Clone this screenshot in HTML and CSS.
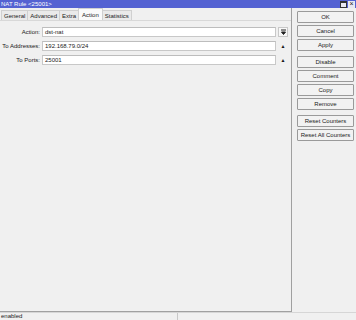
FILE: index.html
```html
<!DOCTYPE html>
<html lang="en">
<head>
    <meta charset="UTF-8">
    <title>NAT Rule &lt;25001&gt;</title>
    <link rel="stylesheet" href="styles.css">
</head>
<body>

<div class="window">
    <!-- Title bar -->
    <div class="titlebar">
        <span class="title">NAT Rule &lt;25001&gt;</span>
        <div class="win-btns">
            <span class="win-btn max"></span>
            <span class="win-btn close">&#215;</span>
        </div>
    </div>

    <div class="body">
        <div class="main">
            <div class="tabs">
                <span class="tab">General</span>
                <span class="tab">Advanced</span>
                <span class="tab">Extra</span>
                <span class="tab active">Action</span>
                <span class="tab">Statistics</span>
            </div>

            <!-- Action tab -->
            <div class="panel">
                <div class="row">
                    <label>Action:</label>
                    <div class="field">dst-nat</div>
                    <span class="ctl drop">
                        <svg width="7" height="7" viewBox="0 0 7 7"><path d="M1 1h5M1.5 3h4L3.5 5.5z" stroke="#222" fill="#222" stroke-width="1"/></svg>
                    </span>
                </div>
                <div class="row">
                    <label>To Addresses:</label>
                    <div class="field">192.168.79.0/24</div>
                    <span class="ctl">&#9650;</span>
                </div>
                <div class="row">
                    <label>To Ports:</label>
                    <div class="field">25001</div>
                    <span class="ctl">&#9650;</span>
                </div>
            </div>
        </div>

        <div class="side">
            <button class="btn">OK</button>
            <button class="btn">Cancel</button>
            <button class="btn">Apply</button>
            <button class="btn gap">Disable</button>
            <button class="btn">Comment</button>
            <button class="btn">Copy</button>
            <button class="btn">Remove</button>
            <button class="btn gap">Reset Counters</button>
            <button class="btn">Reset All Counters</button>
        </div>
    </div>

    <div class="status">
        <div class="cell">enabled</div>
        <div class="cell"></div>
    </div>
</div>

</body>
</html>
```

FILE: styles.css
```css
/* Whole window */
body {
    margin: 0;
    padding: 0;
    font-family: "Liberation Sans", Arial, sans-serif;
    font-size: 6px;
    color: #1a1a1a;
    background-color: #f0f0f0;
    white-space: nowrap;
}

.window {
    width: 356px;
    height: 320px;
    display: flex;
    flex-direction: column;
    overflow: hidden;
}

/* Title bar */
.titlebar {
    height: 8px;
    background-color: #5462d2;
    display: flex;
    justify-content: space-between;
    align-items: center;
    color: white;
}

.title {
    padding-left: 1px;
    line-height: 8px;
}

.win-btns {
    display: flex;
    gap: 1px;
    padding-right: 1px;
}

.win-btn {
    width: 7px;
    height: 7px;
    box-sizing: border-box;
    background-color: #e8e8f0;
    color: #222;
    font-size: 7px;
    line-height: 6px;
    text-align: center;
}

.win-btn.max {
    border: 1px solid #333;
    border-top-width: 2px;
}

/* Main area */
.body {
    flex: 1;
    display: flex;
}

.main {
    width: 291px;
    border-right: 1px solid #a0a0a0;
    border-bottom: 1px solid #a0a0a0;
    display: flex;
    flex-direction: column;
}

.tabs {
    display: flex;
    padding: 2px 0 0 1px;
    height: 10px;
    border-bottom: 1px solid #d8d8d8;
}

.tab {
    padding: 0 2px;
    line-height: 10px;
    border: 1px solid #d0d0d0;
    border-bottom: none;
    margin-right: -1px;
    background-color: #eaeaea;
}

.tab.active {
    background-color: #fafafa;
    margin-top: -2px;
    line-height: 12px;
    padding: 0 3px;
}

.panel {
    flex: 1;
    padding-top: 6px;
    display: flex;
    flex-direction: column;
    gap: 4px;
}

.row {
    display: flex;
    align-items: center;
    height: 10px;
}

.row label {
    width: 40px;
    text-align: right;
    padding-right: 2px;
}

.field {
    width: 234px;
    height: 10px;
    box-sizing: border-box;
    background-color: white;
    border: 1px solid #c8c8c8;
    border-top-color: #bdbdbd;
    padding-left: 2px;
    line-height: 8px;
}

.ctl {
    width: 12px;
    font-size: 5px;
    text-align: center;
    margin-left: 1px;
}

.ctl.drop {
    height: 10px;
    box-sizing: border-box;
    border: 1px solid #c8c8c8;
    margin-left: 2px;
    width: 10px;
    display: flex;
    align-items: center;
    justify-content: center;
    background-color: #f8f8f8;
}

/* Buttons on the right */
.side {
    flex: 1;
    display: flex;
    flex-direction: column;
    gap: 2px;
    padding: 3px 2px 0 5px;
}

.btn {
    height: 12px;
    margin: 0;
    padding: 0;
    font-family: inherit;
    font-size: 6px;
    color: #1a1a1a;
    background-color: #f2f2f2;
    border: 1px solid #9a9a9a;
    border-radius: 1px;
}

.btn.gap {
    margin-top: 3px;
}

/* Status bar */
.status {
    height: 7px;
    display: flex;
    border-top: 1px solid #d6d6d6;
}

.cell {
    width: 176px;
    border-right: 1px solid #c8c8c8;
    line-height: 7px;
    padding-left: 1px;
}

.cell + .cell {
    flex: 1;
    border-right: none;
}
```
